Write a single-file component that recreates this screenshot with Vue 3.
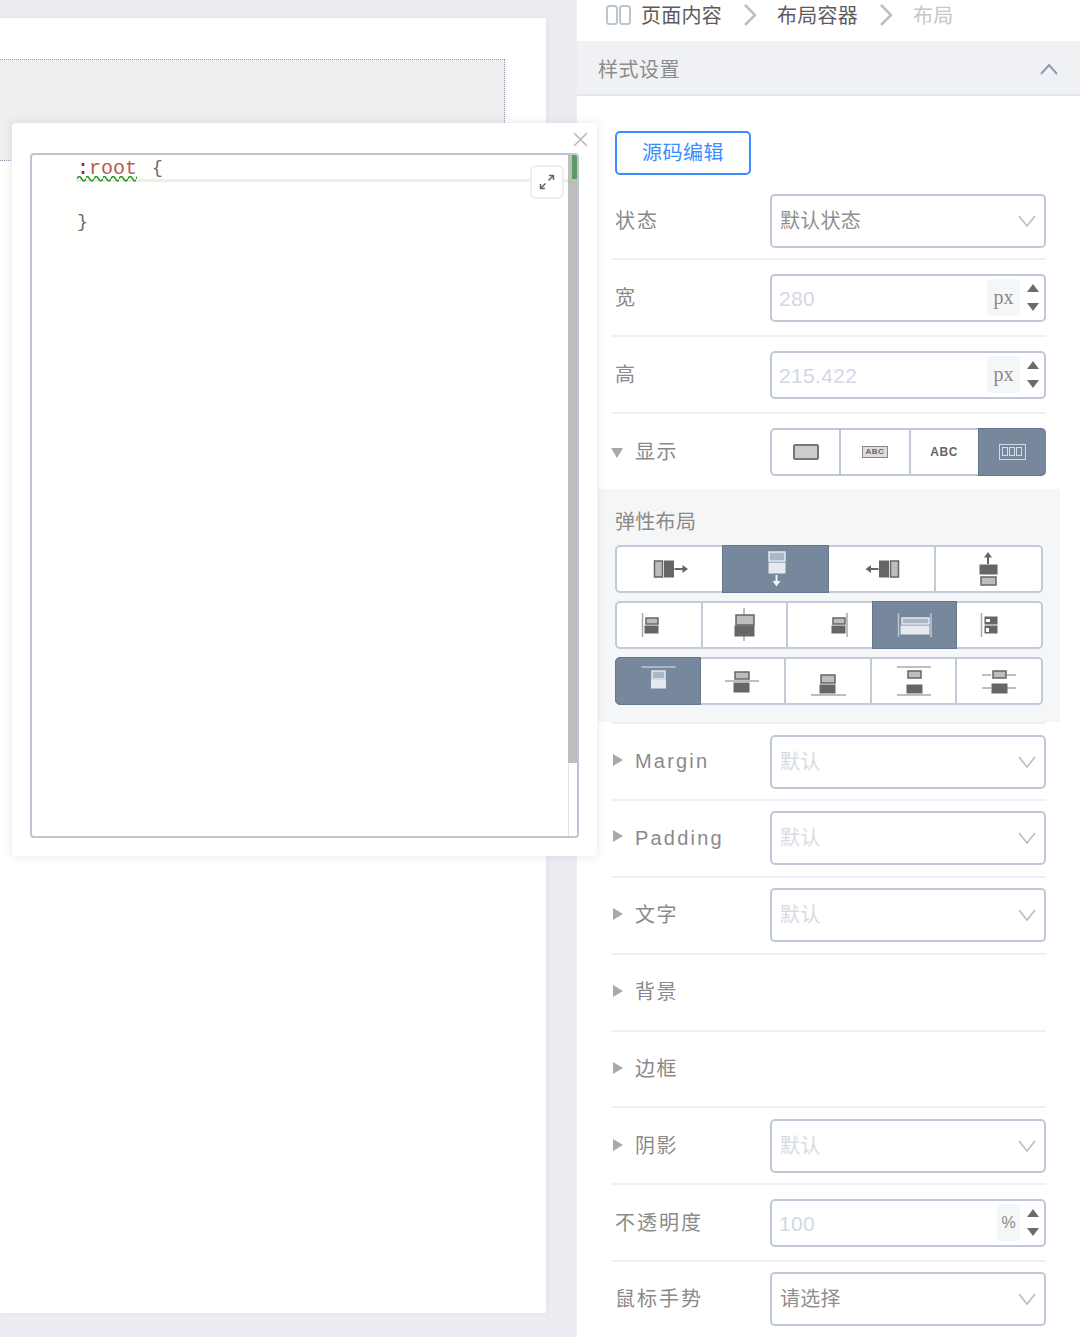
<script setup>
const g = (x, y, w, h) => ({ k: 'r', c: 'box-light', x, y, w, h })
const d = (x, y, w, h) => ({ k: 'r', c: 'box-dark', x, y, w, h })
const l = (x1, y1, x2, y2) => ({ k: 'l', c: 'bar', x1, y1, x2, y2 })
const a = (p) => ({ k: 'p', c: 'arrow', d: p })
const vb = (cx, cy) => `${cx - 20} ${cy - 22} 40 44`

const flexRows = [
  [
    { vb: vb(668.5, 569), s: [g(653, 561, 8, 16), d(663, 561, 9, 16), l(673, 569, 682, 569), a('M681 565l5.500 4-5.500 4z')] },
    { on: true, vb: vb(775, 569), s: [g(768, 552, 16, 9), d(768, 563, 16, 10), l(775.5, 575, 775.5, 582), a('M771.500 581h8l-4 5.500z')] },
    { vb: vb(881.5, 569), s: [a('M870.500 565l-5.500 4 5.500 4z'), l(869, 569, 878, 569), d(879, 561, 9, 16), g(890, 561, 8, 16)] },
    { vb: vb(989, 569), s: [a('M984 557.500l4-5.500 4 5.500z'), l(988, 556, 988, 564), d(980, 565, 17, 9), g(981, 577, 15, 8)] },
  ],
  [
    { vb: vb(658, 625), s: [l(641.500, 613, 641.500, 637), g(645, 618, 12, 6), d(644, 626, 13, 7)] },
    { vb: vb(744, 625), s: [l(744, 608, 744, 641), g(736, 615, 18, 10), d(735, 626, 19, 10)] },
    { vb: vb(829, 625), s: [l(846, 613, 846, 637), g(832, 618, 12, 6), d(831, 626, 13, 7)] },
    { on: true, vb: vb(915, 625), s: [l(898.500, 613, 898.500, 637), l(931, 613, 931, 637), g(902, 618, 27, 6), d(901, 626, 28, 8)] },
    { vb: vb(1000, 625), s: [l(982.500, 613, 982.500, 637), d(986, 617, 12, 7), d(986, 626, 12, 7), { k: 'r', c: 'hole', x: 987, y: 619, w: 4, h: 3 }, { k: 'r', c: 'hole', x: 987, y: 628, w: 3, h: 4 }] },
  ],
  [
    { on: true, vb: vb(657.500, 681), s: [l(641, 667, 675, 667), g(651.500, 671, 13, 8), d(651, 680, 14, 8)] },
    { vb: vb(743, 681), s: [l(726, 681, 760, 681), g(736, 672, 14, 7), d(735, 683, 15, 9)] },
    { vb: vb(828, 681), s: [l(811, 695, 846, 695), g(821, 675, 14, 8), d(820, 685, 15, 8)] },
    { vb: vb(913, 681), s: [l(896, 667, 930, 667), l(896, 695, 930, 695), g(907, 671, 13, 7), d(906, 685, 15, 8)] },
    { vb: vb(999, 681), s: [l(982, 675, 991, 675), l(1007, 675, 1016, 675), l(982, 688, 991, 688), l(1007, 688, 1016, 688), g(993, 671, 13, 7), d(992, 684, 15, 9)] },
  ],
]

const lowerRows = [
  { label: 'Margin', value: '默认', latin: true },
  { label: 'Padding', value: '默认', latin: true },
  { label: '文字', value: '默认' },
  { label: '背景' },
  { label: '边框' },
  { label: '阴影', value: '默认' },
]
</script>

<template>
  <div class="page">
    <div class="stage">
      <div class="canvas">
        <div class="drop-zone"></div>
      </div>
    </div>

    <aside class="panel">
      <nav class="crumbs">
        <svg class="crumb-icon" width="25" height="22" viewBox="0 0 25 22">
          <rect x="1" y="2" width="10" height="18" rx="2.500" />
          <rect x="14" y="2" width="10" height="18" rx="2.500" />
        </svg>
        <span class="crumb">页面内容</span>
        <svg class="crumb-sep" width="14" height="24" viewBox="0 0 14 24"><path d="M2 2l10 10-10 10" /></svg>
        <span class="crumb">布局容器</span>
        <svg class="crumb-sep" width="14" height="24" viewBox="0 0 14 24"><path d="M2 2l10 10-10 10" /></svg>
        <span class="crumb crumb-last">布局</span>
      </nav>

      <header class="section-head">
        <span>样式设置</span>
        <svg width="18" height="12" viewBox="0 0 18 12"><path d="M1 11l8-9 8 9" /></svg>
      </header>

      <div class="section-body">
        <button class="source-btn">源码编辑</button>

        <div class="row">
          <span class="label">状态</span>
          <div class="select">
            <span>默认状态</span>
            <svg class="chev" width="18" height="12" viewBox="0 0 18 12"><path d="M1 1l8 10 8-10" /></svg>
          </div>
        </div>

        <div class="row">
          <span class="label">宽</span>
          <div class="number">
            <span class="num-value">280</span>
            <span class="unit">px</span>
            <span class="stepper"><i class="up"></i><i class="down"></i></span>
          </div>
        </div>

        <div class="row">
          <span class="label">高</span>
          <div class="number">
            <span class="num-value">215.422</span>
            <span class="unit">px</span>
            <span class="stepper"><i class="up"></i><i class="down"></i></span>
          </div>
        </div>

        <div class="row row-open">
          <span class="label label-tree"><i class="tri-down"></i>显示</span>
          <div class="segments">
            <div class="seg">
              <span class="disp-block"></span>
            </div>
            <div class="seg">
              <span class="disp-inline">ABC</span>
            </div>
            <div class="seg">
              <span class="disp-text">ABC</span>
            </div>
            <div class="seg seg-on">
              <span class="disp-flex"><i></i><i></i><i></i></span>
            </div>
          </div>
        </div>

        <section class="flex-block">
          <h3 class="flex-title">弹性布局</h3>
          <div v-for="(cells, r) in flexRows" :key="r" class="icon-row">
            <div v-for="(cell, i) in cells" :key="i" class="icon-cell" :class="{ 'icon-on': cell.on }">
              <svg width="40" height="44" :viewBox="cell.vb">
                <template v-for="(sh, j) in cell.s" :key="j">
                  <rect v-if="sh.k === 'r'" :class="sh.c" :x="sh.x" :y="sh.y" :width="sh.w" :height="sh.h" />
                  <line v-else-if="sh.k === 'l'" :class="sh.c" :x1="sh.x1" :y1="sh.y1" :x2="sh.x2" :y2="sh.y2" />
                  <path v-else :class="sh.c" :d="sh.d" />
                </template>
              </svg>
            </div>
          </div>
        </section>

        <div class="flex-rule"></div>

        <div v-for="row in lowerRows" :key="row.label" class="row">
          <span class="label label-tree" :class="{ 'label-latin': row.latin }"><i class="tri-right"></i>{{ row.label }}</span>
          <div v-if="row.value" class="select select-empty">
            <span>{{ row.value }}</span>
            <svg class="chev" width="18" height="12" viewBox="0 0 18 12"><path d="M1 1l8 10 8-10" /></svg>
          </div>
        </div>

        <div class="row">
          <span class="label">不透明度</span>
          <div class="number">
            <span class="num-value">100</span>
            <span class="unit unit-pct">%</span>
            <span class="stepper"><i class="up"></i><i class="down"></i></span>
          </div>
        </div>

        <div class="row">
          <span class="label">鼠标手势</span>
          <div class="select">
            <span>请选择</span>
            <svg class="chev" width="18" height="12" viewBox="0 0 18 12"><path d="M1 1l8 10 8-10" /></svg>
          </div>
        </div>
      </div>
    </aside>

    <div class="modal">
      <svg class="modal-close" width="15" height="15" viewBox="0 0 15 15"><path d="M1 1l13 13M14 1L1 14" /></svg>
      <div class="editor">
        <div class="code">
          <div class="code-line code-current"><span class="squiggle"><span class="colon">:</span><span class="selector">root</span></span> <span class="brace brace-open">{</span></div>
          <div class="code-line">&nbsp;</div>
          <div class="code-line"><span class="brace">}</span></div>
        </div>
        <button class="expand">
          <svg width="16" height="16" viewBox="0 0 16 16"><path d="M9.500 6.500L14 2M10 1.500h4.500V6M6.500 9.500L2 14M1.500 10v4.500H6" /></svg>
        </button>
        <div class="scroll-track"><div class="scroll-thumb"></div><div class="scroll-mark"></div></div>
      </div>
    </div>
  </div>
</template>

<style>
html, body { margin: 0; background: #ecedf3; }
</style>

<style scoped>
.page {
  position: relative;
  display: flex;
  width: 1080px;
  height: 1337px;
  overflow: hidden;
  background: #ecedf3;
  font-family: "Noto Sans CJK SC", "Noto Sans", sans-serif;
  color: #8a8a8a;
}

.stage { width: 577px; flex: none; padding-top: 18px; box-sizing: border-box; }
.canvas {
  width: 546px;
  height: 1295px;
  padding-top: 41px;
  box-sizing: border-box;
  background: #fff;
  box-shadow: 1px 0 4px rgba(150, 155, 175, .12);
}
.drop-zone {
  width: 505px;
  height: 102px;
  box-sizing: border-box;
  background: #efeff0;
  border: 1px dotted #949cac;
  border-left: 0;
}

.panel { width: 503px; flex: none; background: #fff; }

.crumbs { height: 41px; display: flex; align-items: center; padding: 0 0 11px 29px; box-sizing: border-box; font-size: 20px; color: #5c5c5c; }
.crumb-icon { margin-right: 10px; }
.crumb-icon rect { fill: none; stroke: #bcc5d3; stroke-width: 2; }
.crumb { line-height: 30px; letter-spacing: .25px; }
.crumb-last { color: #c6c6c6; }
.crumb-sep { margin: 0 20px 0 21px; }
.crumb-sep path { fill: none; stroke: #c0bdb8; stroke-width: 2.500; }

.section-head {
  height: 55px;
  box-sizing: border-box;
  display: flex;
  align-items: center;
  justify-content: space-between;
  padding: 2px 22px 0 21px;
  background: #f0f1f4;
  border-bottom: 2px solid #e3e5ec;
  font-size: 20px;
  letter-spacing: .5px;
  color: #8c8c8c;
}
.section-head svg path { fill: none; stroke: #8d9bae; stroke-width: 2; }

.section-body { padding: 35px 34px 0; }

.source-btn {
  display: block;
  margin: 0 0 8.600px 4px;
  width: 136px;
  height: 44px;
  padding: 0 0 4px;
  background: #fff;
  border: 2px solid #3b8cff;
  border-radius: 5px;
  font: inherit;
  font-size: 20px;
  letter-spacing: .5px;
  color: #3b8cff;
}

.row {
  height: 76.850px;
  box-sizing: border-box;
  display: flex;
  align-items: center;
  justify-content: space-between;
  border-bottom: 2px solid #eef0f5;
}
.row-open { height: 75px; border-bottom: 0; }

.label { padding: 0 0 3px 4px; font-size: 20px; letter-spacing: 2px; color: #8a8a8a; white-space: nowrap; }
.label-tree { position: relative; padding-left: 24px; letter-spacing: 1.500px; }
.label-latin { padding-bottom: 0; font-family: "Liberation Sans", sans-serif; letter-spacing: 2.200px; }
.tri-right { position: absolute; left: 2px; top: 50%; margin-top: -7px; border-style: solid; border-width: 6.500px 0 6.500px 10px; border-color: transparent transparent transparent #a9a9a9; }
.label-latin .tri-right { margin-top: -8px; }
.tri-down { position: absolute; left: 0; top: 50%; margin-top: -4px; border-style: solid; border-width: 10px 6px 0; border-color: #a9a9a9 transparent transparent; }

.select {
  width: 276px;
  height: 54px;
  box-sizing: border-box;
  display: flex;
  align-items: center;
  justify-content: space-between;
  padding: 0 8px;
  background: #fff;
  border: 2px solid #bfc8d6;
  border-radius: 5px;
  font-size: 20px;
  letter-spacing: .25px;
  color: #8f8f8f;
}
.select > span { padding-bottom: 3px; }
.select-empty { color: #d6dbe3; }
.chev path { fill: none; stroke: #bdbdbd; stroke-width: 1.600; }

.number {
  width: 276px;
  height: 48px;
  box-sizing: border-box;
  display: flex;
  align-items: center;
  padding: 3px 5px 3px 7px;
  border: 2px solid #bfc8d6;
  border-radius: 5px;
}
.num-value { flex: 1; padding-top: 2px; font-family: "Liberation Sans", sans-serif; font-size: 21px; letter-spacing: .35px; color: #d2d8e3; }
.unit {
  width: 33px;
  height: 37px;
  display: flex;
  align-items: center;
  justify-content: center;
  background: #f5f6f8;
  border-radius: 4px;
  font-family: "Liberation Serif", serif;
  font-size: 20px;
  color: #8a8a8a;
}
.unit-pct { width: 23px; font-family: "Liberation Sans", sans-serif; font-size: 16px; }
.stepper { width: 12px; display: flex; flex-direction: column; align-items: center; gap: 11px; margin-left: 7px; }
.up { border-style: solid; border-width: 0 6px 8px; border-color: transparent transparent #6b6b6b; }
.down { border-style: solid; border-width: 8px 6px 0; border-color: #6b6b6b transparent transparent; }

.segments {
  width: 276px;
  height: 48px;
  box-sizing: border-box;
  display: flex;
  background: #fff;
  border: 2px solid #bfc8d6;
  border-radius: 5px;
}
.seg { flex: 1; display: flex; align-items: center; justify-content: center; border-right: 2px solid #bfc8d6; }
.seg:last-child { border-right: 0; }
.seg-on { background: #77879c; margin: -2px -2px -2px -2px; border: 1px solid #64778f; border-radius: 0 5px 5px 0; }
.disp-block { width: 22px; height: 12px; background: #cccccc; border: 2px solid #777; border-radius: 2px; }
.disp-inline { width: 24px; height: 10px; display: flex; align-items: center; justify-content: center; background: #ddd; border: 1px solid #888; font: 700 8px/1 "Liberation Sans", sans-serif; letter-spacing: .5px; color: #666; }
.disp-text { font: 700 12px/1 "Liberation Sans", sans-serif; letter-spacing: .6px; color: #666; }
.disp-flex { display: flex; gap: 1px; align-items: center; justify-content: center; width: 25px; height: 14px; border: 1px solid #d5dae3; }
.disp-flex i { width: 6px; height: 9px; box-sizing: border-box; border: 1px solid #d5dae3; }

.flex-block { margin: 0 -14px 0 -13px; height: 233px; box-sizing: border-box; padding: 18px 17px 0; background: #f5f6f8; }
.flex-title { margin: 0 0 10px; font-size: 20px; line-height: 28px; font-weight: 400; letter-spacing: .3px; color: #8a8a8a; }
.icon-row { display: flex; height: 48px; box-sizing: border-box; margin-bottom: 8px; background: #fff; border: 2px solid #c3cbd8; border-radius: 5px; }
.icon-cell { flex: 1; display: flex; align-items: center; justify-content: center; border-right: 2px solid #c3cbd8; }
.icon-cell:last-child { border-right: 0; }
.icon-on { background: #77879c; margin: -2px 0 -2px -2px; border: 1px solid #64778f; }
.icon-on:first-child { border-radius: 5px 0 0 5px; }
.flex-rule { height: 2px; background: #eef0f5; }

.box-light { fill: #bdbdbd; stroke: #666; stroke-width: 1.500; }
.box-dark { fill: #666; stroke: #666; stroke-width: 1; }
.bar { stroke: #a8a8a8; stroke-width: 1.500; }
.arrow { fill: #666; }
.hole { fill: #fff; }
.icon-cell .bar:has(+ .arrow), .icon-cell .arrow + .bar { stroke: #666; stroke-width: 2; }
.icon-on .box-light { fill: #a9b7c8; stroke: #e6e9ef; }
.icon-on .box-dark { fill: #e6e9ef; stroke: #e6e9ef; }
.icon-on .bar { stroke: #bcc7d4; }
.icon-on .arrow { fill: #f1f3f6; }
.icon-on .bar:has(+ .arrow) { stroke: #f1f3f6; }

.modal {
  position: absolute;
  left: 12px;
  top: 123px;
  width: 585px;
  height: 733px;
  box-sizing: border-box;
  padding: 30px 18px 18px;
  background: #fff;
  border-radius: 4px;
  box-shadow: 0 0 10px rgba(120, 125, 150, .2);
}
.modal-close { position: absolute; right: 9px; top: 9px; }
.modal-close path { fill: none; stroke: #b9b9b9; stroke-width: 1.500; }

.editor {
  position: relative;
  height: 685px;
  box-sizing: border-box;
  background: #fffffd;
  border: 2px solid #bcc5d3;
  border-radius: 4px;
  overflow: hidden;
}
.code { padding-left: 44px; font-family: "Liberation Mono", monospace; font-size: 20px; line-height: 27px; color: #555; }
.code-line { height: 27px; padding-left: 1px; white-space: pre; }
.code-current { background: #fffffd; box-shadow: inset 0 -3px 0 #eeeeec; }
.selector { color: #b85a5a; }
.colon { color: #a31515; }
.brace { position: relative; top: -1px; font-size: 18px; color: #666; }
.brace-open { margin-left: 3px; }
.squiggle {
  display: inline-block;
  height: 27px;
  background-image: url("data:image/svg+xml,%3Csvg xmlns='http://www.w3.org/2000/svg' width='8.500' height='6'%3E%3Cpath d='M0 2.750q2.125-4.500 4.250 0t4.250 0' fill='none' stroke='%23259a25' stroke-width='1.600'/%3E%3C/svg%3E");
  background-repeat: repeat-x;
  background-position: 0 21px;
}
.expand {
  position: absolute;
  right: 13px;
  top: 10px;
  width: 34px;
  height: 34px;
  padding: 0;
  display: flex;
  align-items: center;
  justify-content: center;
  background: #fff;
  border: 2px solid #eeeeee;
  border-radius: 6px;
}
.expand svg path { fill: none; stroke: #666; stroke-width: 1.500; }
.scroll-track { position: absolute; right: 0; top: 0; bottom: 0; width: 9px; background: #fff; border-left: 1px solid #e3e3e3; box-sizing: border-box; }
.scroll-thumb { position: absolute; left: -1px; right: 0; top: 0; height: 608px; background: #bdbdbd; }
.scroll-mark { position: absolute; right: 0; top: 0; width: 5px; height: 24px; background: #5d9a62; }
</style>
